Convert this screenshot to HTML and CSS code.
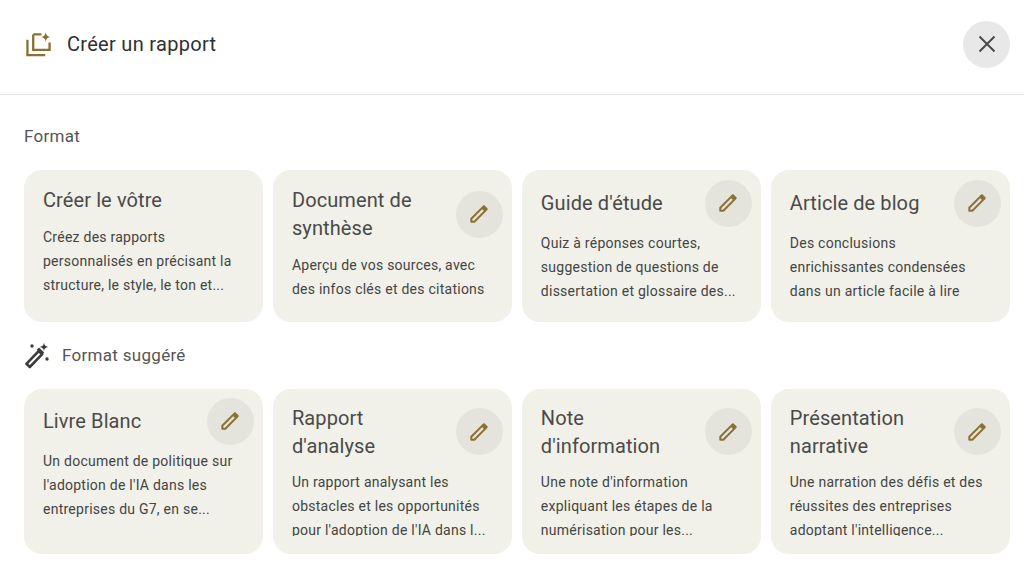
FILE: index.html
```html
<!DOCTYPE html>
<html lang="fr">
<head>
  <meta charset="UTF-8">
  <meta name="viewport" content="width=device-width, initial-scale=1.0">
  <title>Créer un rapport</title>
  <link rel="stylesheet" href="styles.css">
</head>
<body>
  <svg class="sprites" width="0" height="0">
    <symbol id="pencil" viewBox="0 0 24 24">
      <path d="M3.600 20.400v-3.300L15.400 5.300l3.300 3.300L6.900 20.400z" fill="none" stroke="currentColor" stroke-width="2.200" stroke-linejoin="round"/>
      <path d="M15 4.200l1.400-1.300c.6-.5 1.400-.5 2 0l2.700 2.700c.5.6.5 1.400 0 2L19.800 9z" fill="currentColor"/>
    </symbol>
  </svg>

  <header class="top-bar">
    <svg class="report-icon" width="25" height="25" viewBox="0 0 26 26">
      <path d="M1.500 8v16H20M7.500 2.500h8.500M7.500 2.500V18.500H24.500V11" fill="none" stroke="currentColor" stroke-width="2.400"/>
      <path d="M20.500 0c.5 3.400 1.700 4.600 5 5.200-3.300.6-4.500 1.800-5 5.200-.5-3.400-1.700-4.600-5-5.200 3.300-.6 4.500-1.800 5-5.200z" fill="currentColor"/>
    </svg>
    <h1>Créer un rapport</h1>
    <button class="close-btn" aria-label="Fermer">
      <svg width="18" height="18" viewBox="0 0 18 18">
        <path d="M1.500 1.500l15 15M16.500 1.500l-15 15" fill="none" stroke="currentColor" stroke-width="2"/>
      </svg>
    </button>
  </header>

  <main class="content">
    <h2 class="section-title">Format</h2>
    <div class="card-row">
      <div class="card">
        <div class="card-head">
          <h3>Créer le vôtre</h3>
        </div>
        <p>Créez des rapports personnalisés en précisant la structure, le style, le ton et...</p>
      </div>
      <div class="card">
        <div class="card-head">
          <h3>Document de synthèse</h3>
          <button class="edit-btn" aria-label="Modifier"><svg width="22" height="22"><use href="#pencil"/></svg></button>
        </div>
        <p>Aperçu de vos sources, avec des infos clés et des citations</p>
      </div>
      <div class="card">
        <div class="card-head">
          <h3>Guide d'étude</h3>
          <button class="edit-btn" aria-label="Modifier"><svg width="22" height="22"><use href="#pencil"/></svg></button>
        </div>
        <p>Quiz à réponses courtes, suggestion de questions de dissertation et glossaire des...</p>
      </div>
      <div class="card">
        <div class="card-head">
          <h3>Article de blog</h3>
          <button class="edit-btn" aria-label="Modifier"><svg width="22" height="22"><use href="#pencil"/></svg></button>
        </div>
        <p>Des conclusions enrichissantes condensées dans un article facile à lire</p>
      </div>
    </div>

    <div class="suggested">
      <svg width="27" height="27" viewBox="0 0 27 27">
        <path d="M2.400 21.800L14.800 9l3.400 3.200L5.800 25z" fill="none" stroke="currentColor" stroke-width="2.600" stroke-linejoin="round"/>
        <path d="M12.800 7.800l2.200-2.200 5.200 5-2.200 2.200z" fill="currentColor"/>
        <path d="M20 .5c.4 2.800 1.300 3.800 4.400 4.400-3.100.6-4 1.600-4.400 4.400-.4-2.800-1.300-3.800-4.400-4.400 3.100-.6 4-1.600 4.400-4.400z" fill="currentColor"/>
        <circle cx="8" cy="4" r="1.700" fill="currentColor"/>
        <circle cx="23" cy="17" r="1.700" fill="currentColor"/>
      </svg>
      <h2 class="section-title">Format suggéré</h2>
    </div>
    <div class="card-row card-row-clip">
      <div class="card">
        <div class="card-head">
          <h3>Livre Blanc</h3>
          <button class="edit-btn" aria-label="Modifier"><svg width="22" height="22"><use href="#pencil"/></svg></button>
        </div>
        <p>Un document de politique sur l'adoption de l'IA dans les entreprises du G7, en se...</p>
      </div>
      <div class="card">
        <div class="card-head">
          <h3>Rapport d'analyse</h3>
          <button class="edit-btn" aria-label="Modifier"><svg width="22" height="22"><use href="#pencil"/></svg></button>
        </div>
        <p>Un rapport analysant les obstacles et les opportunités pour l'adoption de l'IA dans l...</p>
      </div>
      <div class="card">
        <div class="card-head">
          <h3>Note d'information</h3>
          <button class="edit-btn" aria-label="Modifier"><svg width="22" height="22"><use href="#pencil"/></svg></button>
        </div>
        <p>Une note d'information expliquant les étapes de la numérisation pour les...</p>
      </div>
      <div class="card">
        <div class="card-head">
          <h3>Présentation narrative</h3>
          <button class="edit-btn" aria-label="Modifier"><svg width="22" height="22"><use href="#pencil"/></svg></button>
        </div>
        <p>Une narration des défis et des réussites des entreprises adoptant l'intelligence...</p>
      </div>
    </div>
  </main>
</body>
</html>
```

FILE: styles.css
```css
body {
  font-family: Roboto, "Noto Sans", sans-serif;
  margin: 0;
  padding: 0;
  background-color: #fff;
  color: #444;
}

.sprites {
  display: block;
}

.top-bar {
  display: flex;
  align-items: center;
  box-sizing: border-box;
  height: 95px;
  padding: 0 14px 6px 26px;
  border-bottom: 1px solid #e6e6ef;
}

.top-bar h1 {
  flex: 1;
  margin: 0 0 0 16px;
  font-size: 20px;
  font-weight: 400;
  letter-spacing: 0.3px;
  color: #303030;
}

.report-icon {
  color: #8b7034;
}

.close-btn {
  display: flex;
  align-items: center;
  justify-content: center;
  width: 47px;
  height: 47px;
  padding: 0;
  border: none;
  border-radius: 50%;
  background-color: #e8e8e8;
  color: #4a4a4a;
}

.content {
  padding: 0 14px 0 24px;
}

.section-title {
  margin: 0;
  padding: 32px 0 25px;
  font-size: 17px;
  line-height: 18px;
  font-weight: 400;
  letter-spacing: 0.3px;
  color: #555;
}

.card-row {
  display: grid;
  grid-template-columns: repeat(4, 1fr);
  gap: 9.700px;
}

.card {
  display: flex;
  flex-direction: column;
  box-sizing: border-box;
  height: 152px;
  padding: 9.500px 9.500px 19px 19px;
  border-radius: 18px;
  background-color: #f1f1e9;
}

.card-row-clip .card {
  height: 165px;
  padding-top: 8.500px;
  padding-bottom: 18.500px;
}

.card-head {
  display: flex;
  align-items: center;
  justify-content: space-between;
  gap: 24px;
  margin-bottom: 4.500px;
}

.card h3 {
  margin: 0;
  padding: 6px 0;
  font-size: 20px;
  line-height: 28.600px;
  font-weight: 400;
  letter-spacing: 0.1px;
  color: #4a4a4a;
}

.card-row-clip h3 {
  padding-bottom: 5px;
}

.card p {
  flex: 1;
  min-height: 0;
  overflow: hidden;
  margin: 0;
  padding-right: 9.500px;
  font-size: 14px;
  line-height: 24px;
  letter-spacing: 0.25px;
  color: #444;
}

.edit-btn {
  display: flex;
  flex-shrink: 0;
  align-items: center;
  justify-content: center;
  width: 47px;
  height: 47px;
  padding: 0;
  border: none;
  border-radius: 50%;
  background-color: #e4e4dc;
  color: #8b7034;
}

.suggested {
  display: flex;
  align-items: center;
  gap: 11px;
  height: 67px;
  padding-bottom: 1px;
  box-sizing: border-box;
  color: #3c3c3c;
}

.suggested .section-title {
  padding: 0;
}
```
